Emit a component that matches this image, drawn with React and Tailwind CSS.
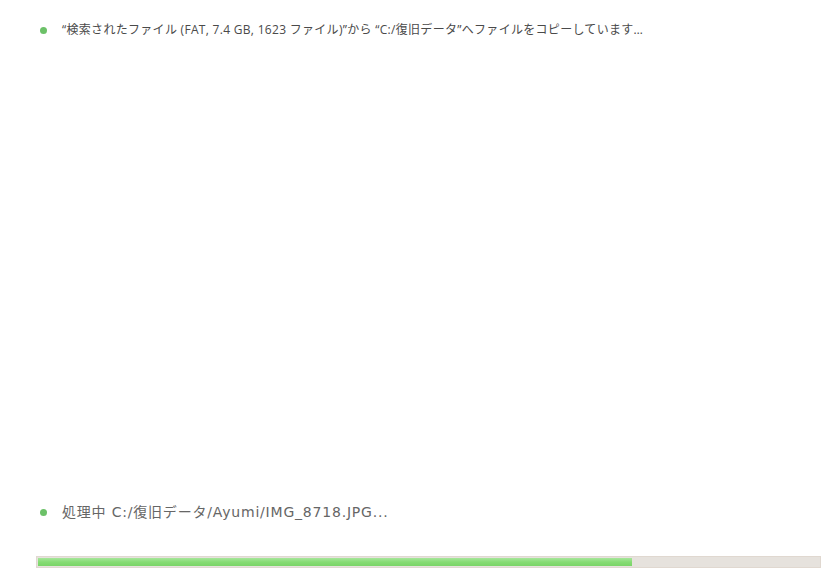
export default function App() {
  const progress = 76;
  return (
    <div
      className="w-[830px] h-[579px] bg-white flex flex-col overflow-hidden"
      style={{ fontFamily: '"Open Sans", "Noto Sans CJK JP", sans-serif' }}
    >
      {/* Status line */}
      <div className="flex items-center h-[20px] mt-[20px] pl-[40px]">
        <span className="w-[7px] h-[7px] rounded-full bg-[#6cc168]" />
        <span className="ml-[15px] text-[12px] text-[#4a4a4a] tracking-[0.3px] whitespace-nowrap">
          “検索されたファイル (FAT, 7.4 GB, 1623 ファイル)”から “C:/復旧データ”へファイルをコピーしています…
        </span>
      </div>

      <div className="flex-1" />

      {/* Current file */}
      <div className="flex items-center h-[22px] pl-[40px]">
        <span className="w-[7px] h-[7px] rounded-full bg-[#6cc168]" />
        <span
          className="ml-[15px] text-[14px] text-[#666666] tracking-[0.8px] whitespace-nowrap"
          style={{ fontFamily: '"DejaVu Sans", "Noto Sans CJK JP", sans-serif' }}
        >
          処理中 C:/復旧データ/Ayumi/IMG_8718.JPG...
        </span>
      </div>

      {/* Progress bar */}
      <div className="mt-[33px] mb-[11px] ml-[36px] w-[785px] h-[12px] border border-[#e0d8d0] bg-[#e6e2dd] p-px">
        <div
          className="h-full bg-gradient-to-b from-[#a6e69a] via-[#86dc74] to-[#7ad468]"
          style={{ width: `${progress}%` }}
        />
      </div>
    </div>
  );
}
